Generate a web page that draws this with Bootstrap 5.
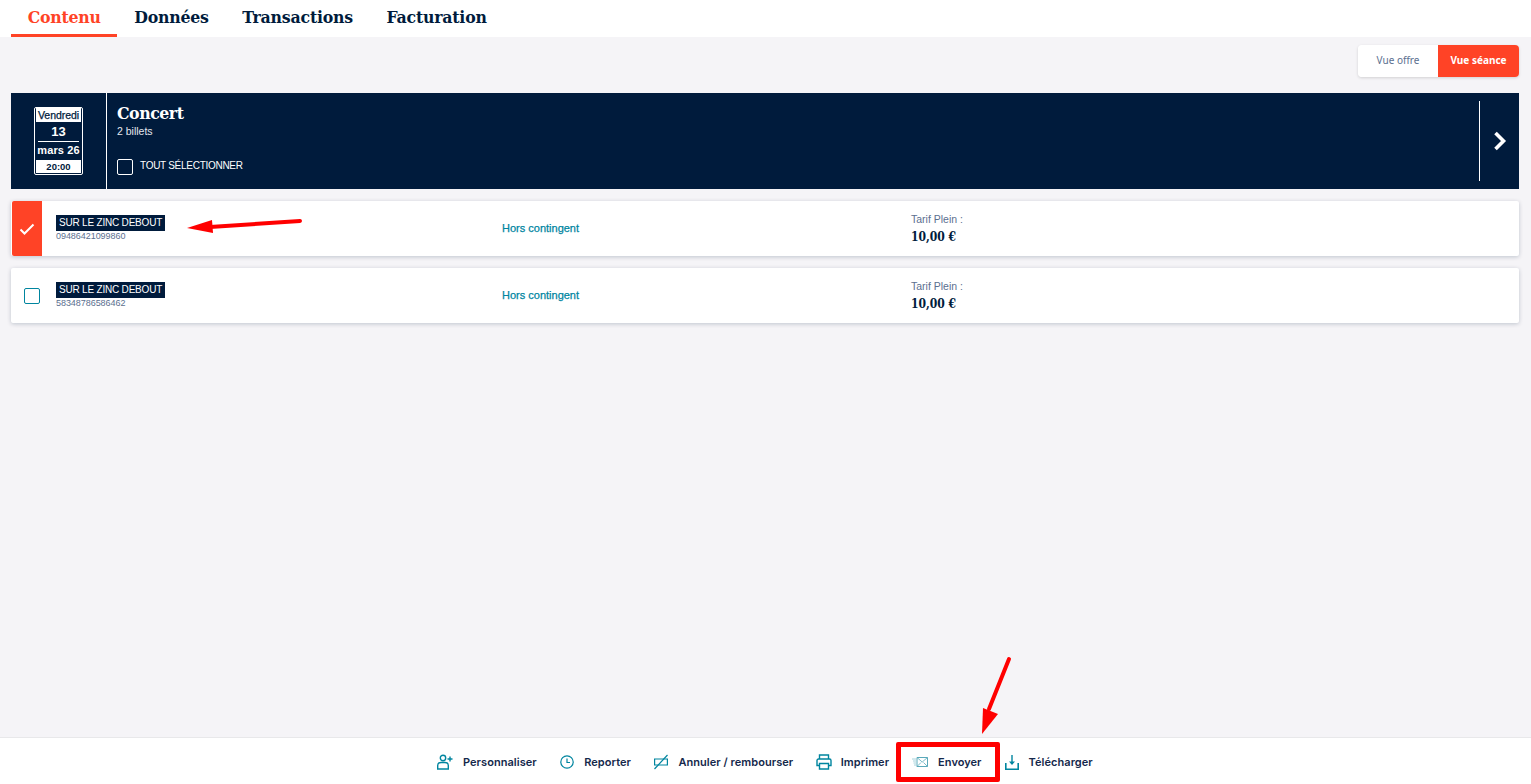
<!DOCTYPE html>
<html lang="fr">
<head>
    <meta charset="UTF-8">
    <meta name="viewport" content="width=device-width, initial-scale=1.0">
    <title>Contenu</title>
    <link href="https://cdn.jsdelivr.net/npm/bootstrap@5.3.2/dist/css/bootstrap.min.css" rel="stylesheet">
    <style>
        html, body { height: 100%; }
        body {
            background: #f5f4f7;
            font-family: "Liberation Sans", Arial, sans-serif;
            color: #001b3c;
            overflow: hidden;
        }
        .page-shell { height: 784px; position: relative; }
        .tabs-bar { height: 37px; padding-left: 11px; background: #fff; }
        .tab-link {
            padding: 0 16.75px;
            height: 37px;
            line-height: 35px;
            font-family: "DejaVu Serif Condensed", "DejaVu Serif", serif;
            font-weight: 700;
            font-size: 17.5px;
            letter-spacing: -.2px;
            color: #001b3c;
            text-decoration: none;
            border-bottom: 3px solid transparent;
        }
        .tab-link.current { color: #ff4326; border-bottom-color: #ff4326; letter-spacing: -.25px; }
        .view-bar { height: 56px; padding: 8px 12px 0 0; }
        .view-switch { height: 32px; border-radius: 4px; box-shadow: 0 1px 3px rgba(0, 0, 0, .15); overflow: hidden; }
        .view-btn {
            font-family: "Noto Sans", sans-serif;
            font-size: 10px;
            line-height: 31px;
            text-align: center;
            background: #fff;
            color: #5b6f8f;
        }
        .view-offer { width: 80px; }
        .view-session { width: 81px; background: #ff4326; color: #fff; font-weight: 700; }
        .show-band { height: 96px; margin: 0 12px 12px 11px; background: #001b3c; color: #fff; }
        .date-cell { width: 96px; border-right: 1px solid #fff; }
        .date-box {
            width: 49px;
            height: 68px;
            border: 1px solid #fff;
            border-radius: 2px;
            text-align: center;
            font-weight: 700;
            padding: 0 1px;
        }
        .date-day { height: 14px; background: #fff; color: #001b3c; font-size: 10.5px; font-weight: 400; line-height: 14px; letter-spacing: -.05px; -webkit-text-stroke: .25px #001b3c; }
        .date-num { height: 20px; font-size: 13px; line-height: 20px; margin: 0 2px; border-bottom: 1px solid #fff; }
        .date-month { height: 18px; font-size: 11px; line-height: 17px; letter-spacing: .1px; white-space: nowrap; }
        .date-time { height: 13px; background: #fff; color: #001b3c; font-size: 9.5px; line-height: 13px; }
        .show-info { padding: 9px 0 0 10px; }
        .show-title { font-family: "DejaVu Serif Condensed", "DejaVu Serif", serif; font-weight: 700; font-size: 17.5px; line-height: 22px; letter-spacing: -.45px; }
        .show-count { font-size: 10.5px; line-height: 12px; margin-top: 1px; color: #e4e8ee; }
        .select-all { margin-top: 21px; font-size: 10px; gap: 7px; }
        .select-all span:last-child { margin-bottom: 3px; letter-spacing: -.28px; }
        .box-white { width: 16px; height: 16px; border: 1px solid #fff; border-radius: 2px; }
        .next-cell { width: 40px; height: 80px; margin: 8px 0; border-left: 1px solid #fff; }
        .ticket-row {
            height: 55px;
            margin: 0 12px 12px 11px;
            background: #fff;
            border-radius: 2px;
            box-shadow: 0 1px 4px rgba(0, 32, 64, .22);
        }
        .check-cell { width: 30px; height: 100%; margin-left: 1px; }
        .check-cell.on { background: #ff4326; border-radius: 2px 0 0 2px; }
        .box-teal { width: 16px; height: 16px; margin-left: 10px; border: 1px solid #00859f; border-radius: 2px; }
        .ticket-name { width: 460px; padding: 0 0 1px 14px; }
        .ticket-tag {
            width: fit-content;
            height: 16px;
            padding: 0 3px;
            background: #001b3c;
            color: #fff;
            font-size: 10px;
            line-height: 15px;
            letter-spacing: -.2px;
        }
        .ticket-code { font-size: 9px; line-height: 10px; color: #5b6f8f; letter-spacing: -.05px; }
        .ticket-quota { width: 409px; font-size: 11px; color: #00859f; -webkit-text-stroke: .25px #00859f; }
        .ticket-label { font-size: 10.5px; line-height: 12px; color: #5b6f8f; }
        .ticket-price { font-family: "DejaVu Serif Condensed", "DejaVu Serif", serif; font-weight: 700; font-size: 12px; line-height: 16px; margin-top: 4px; }
        .action-bar {
            position: absolute;
            left: 0;
            right: 0;
            bottom: 0;
            height: 47px;
            background: #fff;
            border-top: 1px solid #e8e8ea;
            padding: 2px 0 0 425.25px;
        }
        .action-item {
            gap: 10px;
            padding: 0 11.75px;
            font-family: Inter, "Liberation Sans", sans-serif;
            font-weight: 600;
            font-size: 11px;
            letter-spacing: .05px;
            color: #14284b;
            white-space: nowrap;
        }
        .action-item svg { flex: none; }
        .action-item.print-item { gap: 9px; margin-left: -1px; }
        .action-item.boxed {
            height: 40px;
            margin: 0 -6.75px 0 -4.75px;
            padding: 0 13px 0 11px;
            border: 5px solid #f00;
            border-radius: 2px;
            position: relative;
        }
        .notes-layer { position: absolute; inset: 0; pointer-events: none; }
    </style>
</head>
<body>
    <div class="page-shell">
        <div class="tabs-bar d-flex">
            <a class="tab-link current" href="#">Contenu</a>
            <a class="tab-link" href="#">Données</a>
            <a class="tab-link" href="#">Transactions</a>
            <a class="tab-link" href="#">Facturation</a>
        </div>

        <div class="view-bar d-flex justify-content-end">
            <div class="view-switch d-flex">
                <div class="view-btn view-offer">Vue offre</div>
                <div class="view-btn view-session">Vue séance</div>
            </div>
        </div>

        <div class="show-band d-flex">
            <div class="date-cell d-flex align-items-center justify-content-center">
                <div class="date-box">
                    <div class="date-day">Vendredi</div>
                    <div class="date-num">13</div>
                    <div class="date-month">mars 26</div>
                    <div class="date-time">20:00</div>
                </div>
            </div>
            <div class="show-info flex-grow-1">
                <div class="show-title">Concert</div>
                <div class="show-count">2 billets</div>
                <div class="select-all d-flex align-items-center">
                    <span class="box-white"></span>
                    <span>TOUT SÉLECTIONNER</span>
                </div>
            </div>
            <div class="next-cell d-flex align-items-center justify-content-center">
                <svg width="14" height="20" viewBox="0 0 14 20"><path d="M2.5 2l8 8-8 8" fill="none" stroke="#fff" stroke-width="3.6"/></svg>
            </div>
        </div>

        <div class="ticket-row d-flex align-items-center">
            <div class="check-cell on d-flex align-items-center justify-content-center">
                <svg width="16" height="12" viewBox="0 0 16 12"><path d="M1.5 6.5l4 4 9-9" fill="none" stroke="#fff" stroke-width="2"/></svg>
            </div>
            <div class="ticket-name">
                <div class="ticket-tag">SUR LE ZINC DEBOUT</div>
                <div class="ticket-code">09486421099860</div>
            </div>
            <div class="ticket-quota">Hors contingent</div>
            <div>
                <div class="ticket-label">Tarif Plein :</div>
                <div class="ticket-price">10,00 €</div>
            </div>
        </div>

        <div class="ticket-row d-flex align-items-center">
            <div class="check-cell d-flex align-items-center justify-content-center">
                <span class="box-teal"></span>
            </div>
            <div class="ticket-name">
                <div class="ticket-tag">SUR LE ZINC DEBOUT</div>
                <div class="ticket-code">58348786586462</div>
            </div>
            <div class="ticket-quota">Hors contingent</div>
            <div>
                <div class="ticket-label">Tarif Plein :</div>
                <div class="ticket-price">10,00 €</div>
            </div>
        </div>

        <div class="action-bar d-flex align-items-center">
            <div class="action-item d-flex align-items-center">
                <svg width="16" height="16" viewBox="0 0 16 16" fill="none" stroke="#00859f" stroke-width="1.4"><circle cx="6" cy="4" r="2.7"/><path d="M.7 15v-3.5C.7 9.5 2 8.5 4 8.5h4c2 0 3.3 1 3.3 3V15z"/><path d="M13 2.5v5M10.5 5h5"/></svg>
                <span>Personnaliser</span>
            </div>
            <div class="action-item d-flex align-items-center">
                <svg width="14" height="14" viewBox="0 0 14 14" fill="none" stroke="#00859f" stroke-width="1.2"><circle cx="7" cy="7" r="6.2"/><path d="M7 3.5V7.5h3"/></svg>
                <span>Reporter</span>
            </div>
            <div class="action-item d-flex align-items-center">
                <svg width="14" height="16" viewBox="0 0 14 16" fill="none" stroke="#00859f" stroke-width="1.2"><path d="M.6 5h12.8v6H.6z"/><path d="M13.5 1L.5 15"/></svg>
                <span>Annuler / rembourser</span>
            </div>
            <div class="action-item print-item d-flex align-items-center">
                <svg width="16" height="16" viewBox="0 0 16 16" fill="none" stroke="#00859f" stroke-width="1.4"><path d="M3.5 5V1h9v4"/><path d="M3.5 11.5H1V6.5A1.5 1.5 0 0 1 2.5 5h11A1.5 1.5 0 0 1 15 6.5v5h-2.5"/><path d="M3.5 9.5h9V15h-9z"/></svg>
                <span>Imprimer</span>
            </div>
            <div class="action-item boxed d-flex align-items-center">
                <svg width="16" height="10" viewBox="0 0 16 10" fill="none"><path d="M5 .5h10.5v9H5z" stroke="#5aa9ba"/><path d="M5 .5l5.2 4.5L15.5.5M5 9.5l4-4M15.5 9.5l-4-4" stroke="#5aa9ba" stroke-width=".8"/><path d="M0 2h4M1 4h3M1.5 6h2.5M2 8h2" stroke="#a5d2db"/></svg>
                <span>Envoyer</span>
            </div>
            <div class="action-item d-flex align-items-center">
                <svg width="14" height="16" viewBox="0 0 14 16" fill="none" stroke="#00859f"><path d="M.8 9v6.2h12.4V9" stroke-width="1.6"/><path d="M7 1v9" stroke-width="1.4"/><path d="M4 7.5h6L7 11z" fill="#00859f" stroke="none"/></svg>
                <span>Télécharger</span>
            </div>
        </div>

        <!-- annotations -->
        <svg class="notes-layer" width="1531" height="784" viewBox="0 0 1531 784">
            <path d="M300 221l-90 6" stroke="#f00" stroke-width="4" stroke-linecap="round"/>
            <path d="M187 228l25-8 1 13z" fill="#f00"/>
            <path d="M1009 659l-20 50" stroke="#f00" stroke-width="4" stroke-linecap="round"/>
            <path d="M982 734l1-26 15 6z" fill="#f00"/>
        </svg>
    </div>
</body>
</html>
